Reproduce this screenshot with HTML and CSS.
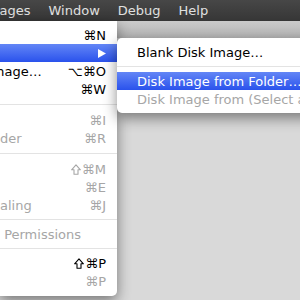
FILE: index.html
```html
<!DOCTYPE html>
<html lang="en">
<head>
    <meta charset="UTF-8">
    <title>Disk Utility - Images menu</title>
    <link rel="stylesheet" href="styles.css">
</head>
<body>
<div class="screen">
    <div class="menubar">
        <span class="title first">Images</span>
        <span class="title">Window</span>
        <span class="title">Debug</span>
        <span class="title">Help</span>
    </div>
    <div class="window">
        <div class="toolbar"></div>
        <div class="desk"></div>
    </div>

    <ul class="menu main">
        <li class="item"><span class="label"></span><span class="key">⌘N</span></li>
        <li class="item hot">
            <span class="label"></span>
            <svg class="arrow" width="8" height="9" viewBox="0 0 8 9"><polygon points="0,0 8,4.5 0,9" fill="#fff"/></svg>
        </li>
        <li class="item"><span class="label cut">Image…</span><span class="key">⌥⌘O</span></li>
        <li class="item"><span class="label"></span><span class="key">⌘W</span></li>
        <li class="sep"></li>
        <li class="item off"><span class="label"></span><span class="key">⌘I</span></li>
        <li class="item off"><span class="label">der</span><span class="key">⌘R</span></li>
        <li class="sep"></li>
        <li class="item off"><span class="label"></span><span class="key"><svg class="shift" width="10" height="11" viewBox="0 0 10 11"><polygon points="5,0.8 9.4,5.8 7,5.8 7,10.3 3,10.3 3,5.8 0.6,5.8" fill="none" stroke="currentColor" stroke-width="1.1" stroke-linejoin="round"/></svg>⌘M</span></li>
        <li class="item off"><span class="label"></span><span class="key">⌘E</span></li>
        <li class="item off"><span class="label">aling</span><span class="key">⌘J</span></li>
        <li class="sep thin"></li>
        <li class="item off"><span class="label">&nbsp;Permissions</span></li>
        <li class="sep thin"></li>
        <li class="item"><span class="label"></span><span class="key"><svg class="shift" width="10" height="11" viewBox="0 0 10 11"><polygon points="5,0.8 9.4,5.8 7,5.8 7,10.3 3,10.3 3,5.8 0.6,5.8" fill="none" stroke="currentColor" stroke-width="1.1" stroke-linejoin="round"/></svg>⌘P</span></li>
        <li class="item off"><span class="label"></span><span class="key">⌘P</span></li>
    </ul>

    <ul class="menu sub">
        <li class="item"><span class="label">Blank Disk Image…</span></li>
        <li class="sep thin"></li>
        <li class="item hot"><span class="label">Disk Image from Folder…</span></li>
        <li class="item off"><span class="label">Disk Image from (Select a disk)</span></li>
    </ul>
</div>
</body>
</html>
```

FILE: styles.css
```css
body {
    margin: 0;
    font-family: "DejaVu Sans", sans-serif;
    font-size: 13px;
}

.screen {
    position: relative;
    width: 300px;
    height: 300px;
    overflow: hidden;
    display: flex;
    flex-direction: column;
    background: #d9d9d9;
}

.menubar {
    flex: 0 0 21px;
    display: flex;
    align-items: center;
    gap: 18px;
    background: linear-gradient(#474747, #363636);
    color: #e0e0e0;
    font-size: 13px;
    white-space: nowrap;
}

/* the left edge of the screen is cropped */
.menubar .first {
    margin-left: -17px;
}

.label.cut {
    margin-left: -12px;
}

.window {
    flex: 1;
    display: flex;
    flex-direction: column;
}

.toolbar {
    flex: 0 0 17px;
    background: linear-gradient(#cbcbcb, #b3b3b3);
}

.desk {
    flex: 1;
    background: #d9d9d9;
}

.menu {
    position: absolute;
    list-style: none;
    margin: 0;
    background: #fff;
    box-shadow: 0 5px 14px rgba(0, 0, 0, 0.45);
    white-space: nowrap;
}

.main {
    top: 21px;
    left: 0;
    width: 117px;
    padding: 5px 0 6px;
    border-radius: 0 0 5px 0;
}

.sub {
    top: 38px;
    left: 117px;
    width: 220px;
    padding: 5px 0;
    border-radius: 5px 0 0 5px;
}

.item {
    height: 18px;
    display: flex;
    align-items: center;
    justify-content: space-between;
    padding-right: 11px;
    color: #000;
}

.sub .item {
    padding-left: 20px;
}

.key {
    display: flex;
    align-items: center;
    gap: 1px;
}

.item.off {
    color: #a6a6a6;
}

.item.hot {
    background: linear-gradient(#6386f6, #2a52ec);
    color: #fff;
}

.sep {
    height: 1px;
    margin: 6px 0;
    background: #e3e3e3;
}

.sep.thin {
    margin: 5px 0;
}
```
